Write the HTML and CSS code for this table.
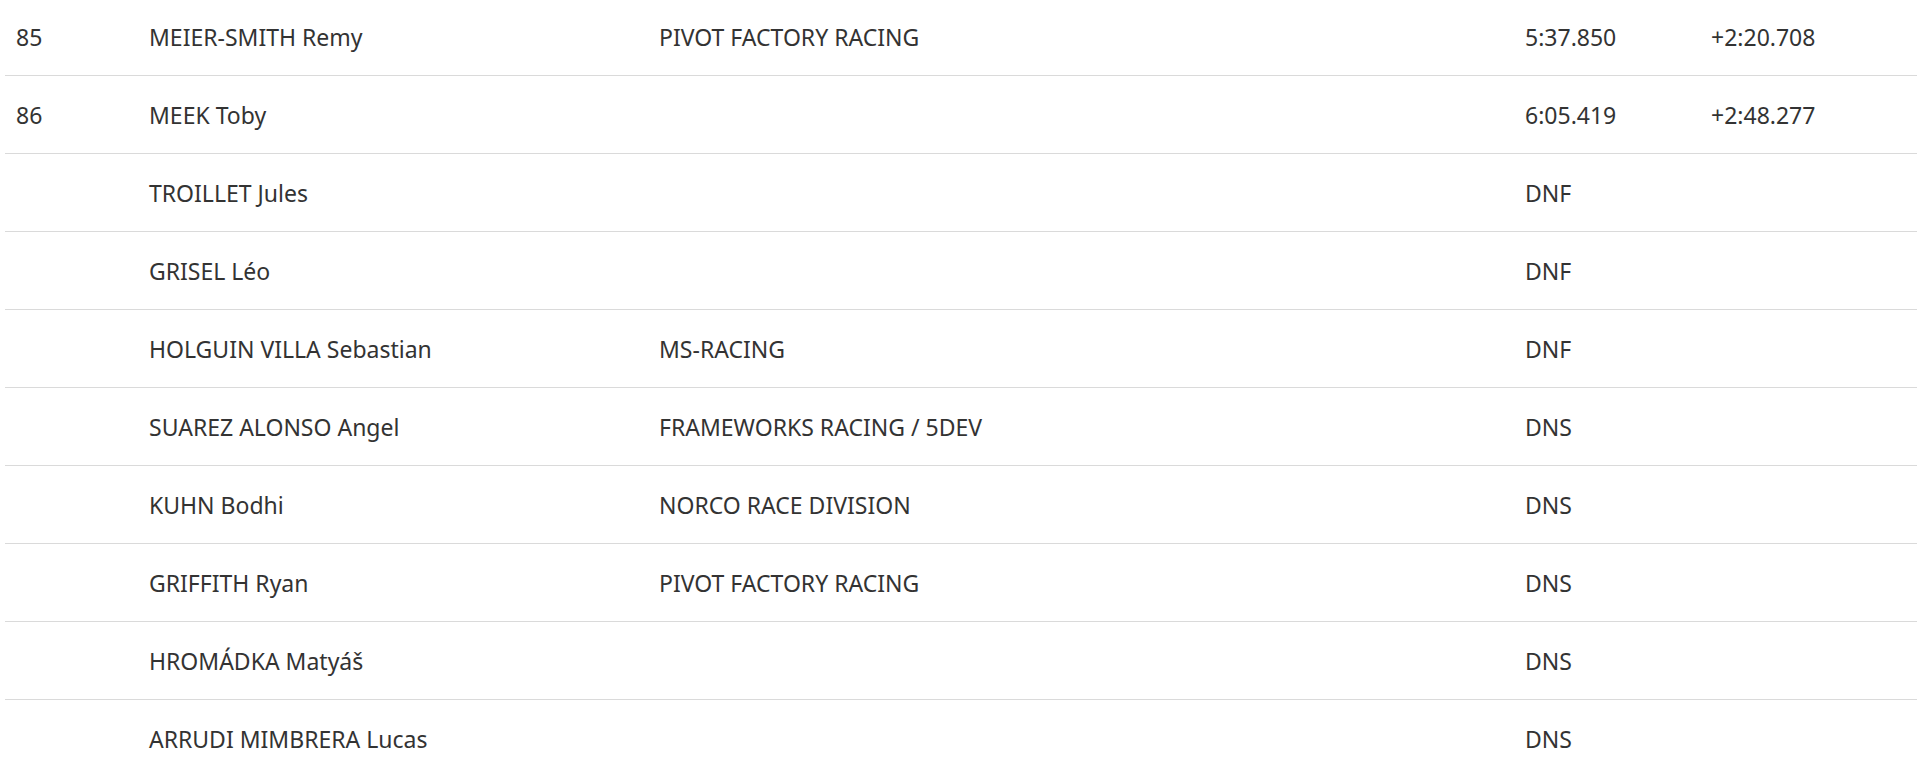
FILE: index.html
```html
<!DOCTYPE html>
<html lang="en">
<head>
<meta charset="utf-8">
<title>Results</title>
<link rel="stylesheet" href="styles.css">
</head>
<body>
<div class="results">
  <div class="row"><div class="cell pos">85</div><div class="cell name">MEIER-SMITH Remy</div><div class="cell team">PIVOT FACTORY RACING</div><div class="cell time">5:37.850</div><div class="cell gap">+2:20.708</div></div>
  <div class="row"><div class="cell pos">86</div><div class="cell name">MEEK Toby</div><div class="cell team"></div><div class="cell time">6:05.419</div><div class="cell gap">+2:48.277</div></div>
  <div class="row"><div class="cell pos"></div><div class="cell name">TROILLET Jules</div><div class="cell team"></div><div class="cell time">DNF</div><div class="cell gap"></div></div>
  <div class="row"><div class="cell pos"></div><div class="cell name">GRISEL Léo</div><div class="cell team"></div><div class="cell time">DNF</div><div class="cell gap"></div></div>
  <div class="row"><div class="cell pos"></div><div class="cell name">HOLGUIN VILLA Sebastian</div><div class="cell team">MS-RACING</div><div class="cell time">DNF</div><div class="cell gap"></div></div>
  <div class="row"><div class="cell pos"></div><div class="cell name">SUAREZ ALONSO Angel</div><div class="cell team">FRAMEWORKS RACING / 5DEV</div><div class="cell time">DNS</div><div class="cell gap"></div></div>
  <div class="row"><div class="cell pos"></div><div class="cell name">KUHN Bodhi</div><div class="cell team">NORCO RACE DIVISION</div><div class="cell time">DNS</div><div class="cell gap"></div></div>
  <div class="row"><div class="cell pos"></div><div class="cell name">GRIFFITH Ryan</div><div class="cell team">PIVOT FACTORY RACING</div><div class="cell time">DNS</div><div class="cell gap"></div></div>
  <div class="row"><div class="cell pos"></div><div class="cell name">HROMÁDKA Matyáš</div><div class="cell team"></div><div class="cell time">DNS</div><div class="cell gap"></div></div>
  <div class="row"><div class="cell pos"></div><div class="cell name">ARRUDI MIMBRERA Lucas</div><div class="cell team"></div><div class="cell time">DNS</div><div class="cell gap"></div></div>
</div>
</body>
</html>
```
FILE: styles.css
```css
html, body {
  margin: 0;
  padding: 0;
  background: #ffffff;
}

body {
  font-family: "Noto Sans", "Open Sans", sans-serif;
  font-size: 23px;
  color: #333333;
  overflow: hidden;
}

.results {
  margin: -2px 0 0 5px;
  width: 1912px;
}

.row {
  display: grid;
  grid-template-columns: 133px 510px 866px 186px 1fr;
  height: 77px;
  align-items: center;
  border-bottom: 1px solid #dadada;
}

.cell {
  padding-left: 11px;
  line-height: 34px;
  white-space: nowrap;
}
```
